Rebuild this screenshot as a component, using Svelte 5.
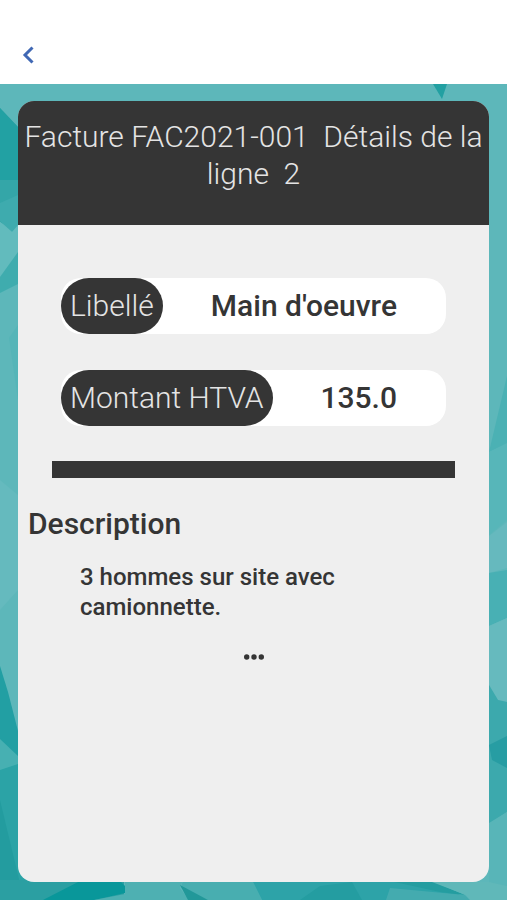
<script lang="ts">
	const invoice = 'FAC2021-001'
	const line = 2

	const fields = [
		{ label: 'Libellé', value: "Main d'oeuvre" },
		{ label: 'Montant HTVA', value: '135.0' },
	]

	const description = '3 hommes sur site avec camionnette.'

	const facets = [
		{ fill: '#34a6a8', points: '0,108 18,127 18,232 0,222' },
		{ fill: '#22a1a3', points: '0,108 18,127 18,180 0,180' },
		{ fill: '#3eabae', points: '0,203 18,195 18,229 12,232 0,221' },
		{ fill: '#62bbbd', points: '0,222 12,232 18,225 18,262 0,278' },
		{ fill: '#3facae', points: '18,252 0,277 0,293 18,284' },
		{ fill: '#55b5b8', points: '9,338 18,325 18,400' },
		{ fill: '#65babe', points: '0,480 18,495 18,590 0,610' },
		{ fill: '#229fa3', points: '0,666 8,692 18,731 18,765 0,748' },
		{ fill: '#47b0b2', points: '0,739 18,756 18,900 0,900' },
		{ fill: '#2ba3a6', points: '0,770 18,764 34,900 0,900' },
		{ fill: '#239c9f', points: '0,800 24,900 0,900' },
		{ fill: '#22a0a2', points: '433,84 447,84 442,99' },
		{ fill: '#4bb1b4', points: '507,376 489,452 507,444' },
		{ fill: '#57b6b9', points: '489,452 507,443 507,520 489,535' },
		{ fill: '#66b9be', points: '489,536 507,522 507,568 489,573' },
		{ fill: '#48b0b4', points: '489,573 507,570 507,618 489,626' },
		{ fill: '#66babe', points: '489,626 507,618 507,702 498,700 489,685' },
		{ fill: '#3ca9ad', points: '489,685 498,700 507,702 507,812 489,824' },
		{ fill: '#279da3', points: '489,745 507,736 507,768 492,760' },
		{ fill: '#58b5b8', points: '507,812 489,823 489,882 507,888' },
		{ fill: '#2b9fa2', points: '0,880 124,880 124,900 0,900' },
		{ fill: '#09979a', points: '82,880 119,880 125,886 125,893 94,900 43,900' },
		{ fill: '#4eb0b2', points: '125,880 183,880 180,888 189,900 94,900 125,894' },
		{ fill: '#48aeb0', points: '183,880 252,880 262,900 208,900 181,888' },
		{ fill: '#229899', points: '180,885 208,900 188,900' },
		{ fill: '#2da3a8', points: '252,880 430,880 470,900 262,900' },
		{ fill: '#249da1', points: '300,900 320,886 352,882 362,900' },
		{ fill: '#44abaf', points: '390,888 465,895 470,900 386,900' },
		{ fill: '#249da0', points: '390,881 432,881 465,895 440,892' },
		{ fill: '#60b8b9', points: '432,882 489,882 507,886 507,900 470,900 466,895' },
	]
</script>

<div class="page">
	<nav>
		<button type="button" class="back" aria-label="Retour">
			<svg viewBox="0 0 12 18" width="12" height="18" aria-hidden="true">
				<path d="M10.500 1.500 3 9l7.500 7.500" />
			</svg>
		</button>
	</nav>

	<main>
		<svg class="backdrop" viewBox="0 84 507 816" preserveAspectRatio="none" aria-hidden="true">
			<rect y="84" width="507" height="816" fill="#5db7ba" />
			{#each facets as facet}
				<polygon points={facet.points} fill={facet.fill} />
			{/each}
		</svg>

		<article class="card">
			<h1>Facture {invoice}&nbsp; Détails de la ligne&nbsp; {line}</h1>

			<dl>
				{#each fields as field}
					<div class="field">
						<dt>{field.label}</dt>
						<dd>{field.value}</dd>
					</div>
				{/each}
			</dl>

			<hr />

			<section>
				<h2>Description</h2>
				<p>{description}</p>
				<button type="button" class="more" aria-label="Plus">
					<svg viewBox="0 0 22 6" width="22" height="6" aria-hidden="true">
						<circle cx="3.700" cy="3" r="2.700" />
						<circle cx="11" cy="3" r="2.700" />
						<circle cx="18.300" cy="3" r="2.700" />
					</svg>
				</button>
			</section>
		</article>
	</main>
</div>

<style>
	:global(body) {
		margin: 0;
		background: #fff;
	}

	.page {
		display: flex;
		flex-direction: column;
		min-height: 100vh;
		font-family: Roboto, sans-serif;
		color: #353535;
	}

	nav {
		padding: 38px 14px 12px;
	}

	button {
		display: grid;
		place-items: center;
		padding: 0;
		border: 0;
		background: none;
		cursor: pointer;
	}

	.back {
		width: 28px;
		height: 34px;
	}

	.back path {
		fill: none;
		stroke: #4068b4;
		stroke-width: 3;
	}

	main {
		position: relative;
		display: flex;
		flex: 1;
		padding: 17px 18px 18px;
	}

	.backdrop {
		position: absolute;
		inset: 0;
		width: 100%;
		height: 100%;
	}

	.card {
		position: relative;
		flex: 1;
		overflow: hidden;
		border-radius: 16px;
		background: #efefef;
	}

	h1 {
		margin: 0;
		padding: 17px 4px 33px;
		background: #353535;
		color: #e4e4e4;
		font-size: 30px;
		font-weight: 300;
		line-height: 37px;
		text-align: center;
	}

	dl {
		display: grid;
		gap: 36px;
		margin: 53px 43px 35px;
	}

	.field {
		display: flex;
		align-items: center;
		justify-content: space-between;
		border-radius: 20px;
		background: #fff;
		font-size: 30px;
		line-height: 56px;
	}

	dt {
		padding: 0 9px;
		border-radius: 28px;
		background: #353535;
		color: #e4e4e4;
		font-weight: 300;
	}

	dd {
		margin: 0 49px 0 0;
		font-weight: 500;
	}

	hr {
		height: 17px;
		margin: 0 34px;
		border: 0;
		background: #353535;
	}

	section {
		padding: 28px 10px;
	}

	h2 {
		margin: 0 0 20px;
		font-size: 30px;
		font-weight: 500;
		line-height: 36px;
	}

	p {
		margin: 0 90px 20px 52px;
		font-size: 24px;
		font-weight: 500;
		line-height: 30px;
	}

	.more {
		width: 44px;
		height: 30px;
		margin: 0 auto;
	}

	.more circle {
		fill: #353535;
	}
</style>
